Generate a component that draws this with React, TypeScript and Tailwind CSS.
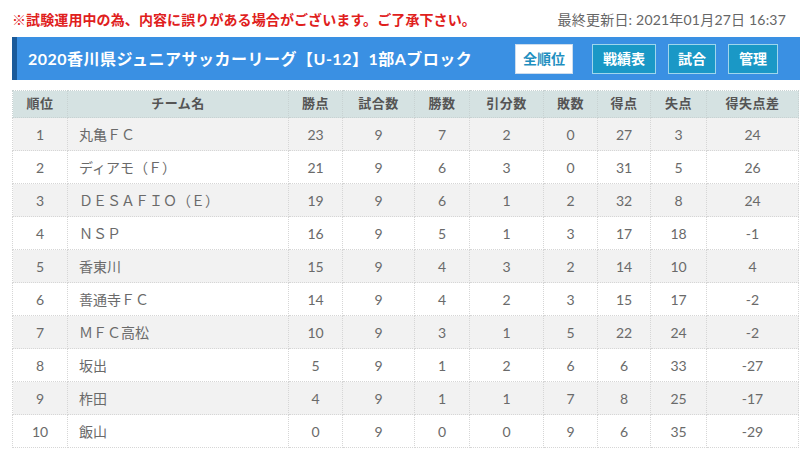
import React from "react";

const cols = [
  { label: "順位", w: "w-[55px]" },
  { label: "チーム名", w: "w-[221px]" },
  { label: "勝点", w: "w-[54px]" },
  { label: "試合数", w: "w-[72px]" },
  { label: "勝数", w: "w-[55px]" },
  { label: "引分数", w: "w-[74px]" },
  { label: "敗数", w: "w-[54px]" },
  { label: "得点", w: "w-[53px]" },
  { label: "失点", w: "w-[56px]" },
  { label: "得失点差", w: "w-[92px]" },
];

const rows: (string | number)[][] = [
  [1, "丸亀ＦＣ", 23, 9, 7, 2, 0, 27, 3, 24],
  [2, "ディアモ（Ｆ）", 21, 9, 6, 3, 0, 31, 5, 26],
  [3, "ＤＥＳＡＦＩＯ（Ｅ）", 19, 9, 6, 1, 2, 32, 8, 24],
  [4, "ＮＳＰ", 16, 9, 5, 1, 3, 17, 18, -1],
  [5, "香東川", 15, 9, 4, 3, 2, 14, 10, 4],
  [6, "善通寺ＦＣ", 14, 9, 4, 2, 3, 15, 17, -2],
  [7, "ＭＦＣ高松", 10, 9, 3, 1, 5, 22, 24, -2],
  [8, "坂出", 5, 9, 1, 2, 6, 6, 33, -27],
  [9, "柞田", 4, 9, 1, 1, 7, 8, 25, -17],
  [10, "飯山", 0, 9, 0, 0, 9, 6, 35, -29],
];

const App = () => {
  return (
    <div
      className="w-[800px] h-[458px] bg-white overflow-hidden px-[12px]"
      style={{ fontFamily: "Lato, 'Noto Sans CJK JP', sans-serif" }}
    >
      <div className="flex items-center justify-between h-[37px] pt-[2px]">
        <p className="text-[14px] font-bold text-[#e0201c] tracking-[0.1px]">
          ※試験運用中の為、内容に誤りがある場合がございます。ご了承下さい。
        </p>
        <p className="text-[14px] text-[#666] pr-[2px] tracking-[0.2px]">最終更新日: 2021年01月27日 16:37</p>
      </div>

      <div className="flex items-center justify-between h-[43px] bg-[#3a90e3] border-l-[5px] border-[#1a5a9a] mr-[-12px] pl-[11px] pr-[22px]">
        <h1 className="text-[16px] font-bold text-white tracking-[0.5px]">
          2020香川県ジュニアサッカーリーグ【U-12】1部Aブロック
        </h1>
        <div className="flex items-center gap-[12px]">
          <span className="flex items-center justify-center w-[58px] h-[30px] mr-[7px] bg-white border border-[#cde] text-[14px] font-bold text-[#1f8fbf]">
            全順位
          </span>
          <span className="flex items-center justify-center w-[64px] h-[30px] bg-[#1a98c6] border border-[#9fd6ec] text-[14px] font-bold text-white">
            戦績表
          </span>
          <span className="flex items-center justify-center w-[48px] h-[30px] bg-[#1a98c6] border border-[#9fd6ec] text-[14px] font-bold text-white">
            試合
          </span>
          <span className="flex items-center justify-center w-[50px] h-[30px] bg-[#1a98c6] border border-[#9fd6ec] text-[14px] font-bold text-white">
            管理
          </span>
        </div>
      </div>

      <table className="mt-[10px] w-[786px] border-collapse table-fixed">
        <thead>
          <tr className="h-[27px] bg-[#d5e2e2]">
            {cols.map((c) => (
              <th
                key={c.label}
                className={`${c.w} text-[13px] font-bold text-[#555] border border-dotted border-[#c8d2d2] tracking-[0.5px]`}
              >
                {c.label}
              </th>
            ))}
          </tr>
        </thead>
        <tbody>
          {rows.map((r, i) => (
            <tr key={i} className={`h-[33px] ${i % 2 === 0 ? "bg-[#f2f2f2]" : "bg-white"}`}>
              {r.map((v, j) => (
                <td
                  key={j}
                  className={`text-[14px] text-[#6a6a6a] border border-dotted border-[#d6d6d6] ${
                    j === 1 ? "text-left pl-[11px]" : "text-center"
                  }`}
                >
                  {v}
                </td>
              ))}
            </tr>
          ))}
        </tbody>
      </table>
    </div>
  );
};

export default App;
